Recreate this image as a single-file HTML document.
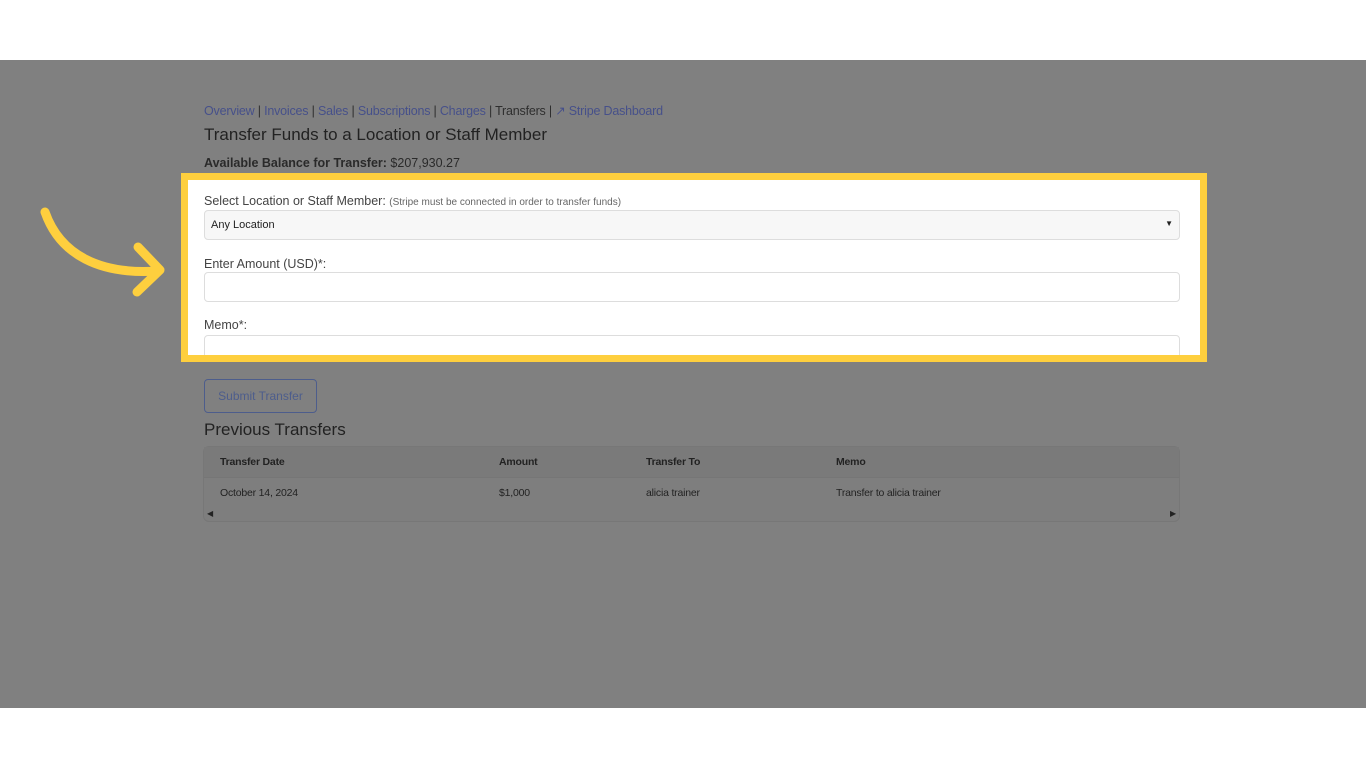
<!DOCTYPE html>
<html><head><meta charset="utf-8"><style>
*{margin:0;padding:0;box-sizing:border-box}
body{width:1366px;height:768px;background:#fff;font-family:"Liberation Sans",sans-serif;position:relative;overflow:hidden}
.bg{position:absolute;left:0;top:60px;width:1366px;height:648px;background:#808080}
.a{position:absolute;white-space:nowrap}
.nav{left:204px;top:103px;font-size:12.5px;letter-spacing:-0.2px;color:#2e2e2e}
.nav span.l{color:#46508a}
h1{position:absolute;left:204px;top:125px;font-size:17px;font-weight:normal;color:#222}
.bal{left:204px;top:156px;font-size:12.5px;color:#2a2a2a}
.hl{position:absolute;left:181px;top:173px;width:1026px;height:189px;border:7px solid #fecf3e;background:#fff;overflow:hidden}
.lbl{font-size:12.5px;color:#444}
.inp{position:absolute;left:16px;width:976px;height:30px;border:1px solid #ddd;border-radius:4px;background:#fff}
.btn{position:absolute;left:204px;top:379px;width:113px;height:34px;border:1px solid #4d5d8c;border-radius:4px;font-size:12px;color:#4d5d8c;text-align:center;line-height:33px}
h2{position:absolute;left:204px;top:420px;font-size:17px;font-weight:normal;color:#222}
.tbl{position:absolute;left:203px;top:446px;width:977px;height:76px;border:1px solid #777;border-radius:6px;background:#7e7e7e}
.th{position:absolute;top:0;left:0;width:100%;height:31px;background:#7a7a7a;border-bottom:1px solid #767676}
.t{position:absolute;font-size:10.5px;letter-spacing:-0.2px;color:#222}
</style></head><body>
<div class="bg"></div>
<div class="a nav"><span class="l">Overview</span> | <span class="l">Invoices</span> | <span class="l">Sales</span> | <span class="l">Subscriptions</span> | <span class="l">Charges</span> | Transfers | <span class="l">&#x2197;&#xFE0E; Stripe Dashboard</span></div>
<h1>Transfer Funds to a Location or Staff Member</h1>
<div class="a bal"><b>Available Balance for Transfer:</b> $207,930.27</div>
<div class="hl">
 <div class="a lbl" style="left:16px;top:14px">Select Location or Staff Member: <span style="font-size:10px;color:#666">(Stripe must be connected in order to transfer funds)</span></div>
 <div class="inp" style="top:30px;background:#f7f7f7"><span class="a" style="left:6px;top:8px;font-size:11px;color:#222">Any Location</span><span class="a" style="right:6px;top:8px;font-size:8px;color:#222">&#9660;</span></div>
 <div class="a lbl" style="left:16px;top:77px">Enter Amount (USD)*:</div>
 <div class="inp" style="top:92px"></div>
 <div class="a lbl" style="left:16px;top:138px">Memo*:</div>
 <div class="inp" style="top:155px"></div>
</div>
<svg style="position:absolute;left:30px;top:195px" width="150" height="110"><path d="M15 17 C30 60 70 80 128 76" fill="none" stroke="#fecf3e" stroke-width="9" stroke-linecap="round"/><path d="M108 52 L130 75 L107 97" fill="none" stroke="#fecf3e" stroke-width="9" stroke-linecap="round" stroke-linejoin="round"/></svg>
<div class="btn">Submit Transfer</div>
<h2>Previous Transfers</h2>
<div class="tbl"><div class="th"></div>
<div class="t" style="left:16px;top:9px;font-weight:bold">Transfer Date</div>
<div class="t" style="left:295px;top:9px;font-weight:bold">Amount</div>
<div class="t" style="left:442px;top:9px;font-weight:bold">Transfer To</div>
<div class="t" style="left:632px;top:9px;font-weight:bold">Memo</div>
<div class="t" style="left:16px;top:40px">October 14, 2024</div>
<div class="t" style="left:295px;top:40px">$1,000</div>
<div class="t" style="left:442px;top:40px">alicia trainer</div>
<div class="t" style="left:632px;top:40px">Transfer to alicia trainer</div>
<div class="t" style="left:3px;top:62px;font-size:8px">&#9664;</div>
<div class="t" style="right:3px;top:62px;font-size:8px">&#9654;</div>
</div>
</body></html>
